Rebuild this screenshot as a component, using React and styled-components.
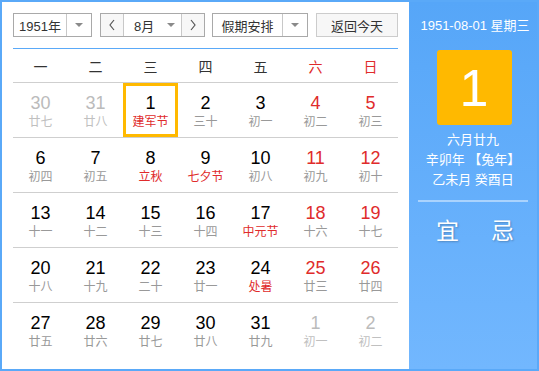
import React from "react";
import styled, { createGlobalStyle } from "styled-components";

const GlobalStyle = createGlobalStyle`
  html, body { margin: 0; padding: 0; background: #fff; }
  body { font-family: "Liberation Sans", "Noto Sans CJK SC", sans-serif; }
  * { box-sizing: border-box; }
`;

const Frame = styled.div`
  width: 539px;
  height: 371px;
  border: 2px solid #5aa9f8;
  display: flex;
  font-family: "Liberation Sans", "Noto Sans CJK SC", sans-serif;
`;

const Main = styled.div`
  width: 407px;
  background: #fff;
  padding: 11px 11px 0 11px;
  display: flex;
  flex-direction: column;
`;

const Toolbar = styled.div`
  display: flex;
  height: 24px;
  gap: 8px;
  margin-bottom: 11px;
`;

const SelectBox = styled.div`
  display: flex;
  width: ${(p) => p.$w}px;
  height: 24px;
  border: 1px solid #a9a9a9;
  background: #fff;
  margin-right: ${(p) => p.$mr || 0}px;
`;

const SelectText = styled.div`
  flex: 1;
  display: flex;
  align-items: center;
  justify-content: center;
  font-size: 13px;
  color: #333;
  border-right: 1px solid #c8c8c8;
`;

const ArrowPart = styled.div`
  width: ${(p) => p.$w || 24}px;
  display: flex;
  align-items: center;
  justify-content: center;
`;

const Triangle = styled.span`
  width: 0;
  height: 0;
  border-left: 4px solid transparent;
  border-right: 4px solid transparent;
  border-top: 4px solid #8a8a8a;
`;

const NavBtn = styled.div`
  width: 23px;
  flex: none;
  display: flex;
  align-items: center;
  justify-content: center;
  background: #f7f7f7;
  border-${(p) => p.$side}: 1px solid #c8c8c8;
`;

const MonthText = styled.div`
  flex: 1;
  display: flex;
  align-items: center;
  justify-content: space-between;
  padding: 0 6px 0 10px;
  font-size: 13px;
  color: #333;
`;

const TodayBtn = styled.div`
  width: 82px;
  height: 24px;
  border: 1px solid #cccccc;
  background: #f7f7f7;
  display: flex;
  align-items: center;
  justify-content: center;
  font-size: 13px;
  color: #333;
`;

const BlueLine = styled.div`
  height: 1px;
  background: #5aa9f8;
  width: 385px;
`;

const Grid = styled.div`
  width: 385px;
  display: grid;
  grid-template-columns: repeat(7, 55px);
`;

const HeadCell = styled.div`
  height: 34px;
  border-bottom: 1px solid #cfcfcf;
  display: flex;
  align-items: center;
  justify-content: center;
  font-size: 14px;
  color: ${(p) => (p.$weekend ? "#e02b2b" : "#333")};
`;

const DayCell = styled.div`
  height: 55px;
  border-bottom: ${(p) => (p.$last ? "none" : "1px solid #cfcfcf")};
  display: flex;
  flex-direction: column;
  align-items: center;
  padding-top: 9px;
  position: relative;
`;

const SelFrame = styled.div`
  position: absolute;
  left: 0;
  top: 0;
  width: 55px;
  height: 54px;
  border: 3px solid #ffb900;
`;

const DayNum = styled.div`
  font-size: 18px;
  line-height: 22px;
  color: ${(p) => (p.$other ? "#bbbbbb" : p.$weekend ? "#e02b2b" : "#000")};
`;

const Lunar = styled.div`
  font-size: 12px;
  line-height: 16px;
  color: ${(p) => (p.$other ? "#c0c0c0" : p.$fest ? "#e02b2b" : "#999")};
`;

const Side = styled.div`
  flex: 1;
  background: linear-gradient(to bottom, #56a6f8, #72b7fe);
  display: flex;
  flex-direction: column;
  align-items: center;
  color: #fff;
  padding-top: 14px;
`;

const SideDate = styled.div`
  font-size: 13px;
  line-height: 20px;
  margin-left: 4px;
`;

const BigBox = styled.div`
  width: 75px;
  height: 75px;
  margin-top: 14px;
  margin-left: 2px;
  background: #ffb900;
  border-radius: 3px;
  display: flex;
  align-items: center;
  justify-content: center;
  font-size: 52px;
  color: #fff;
`;

const SideLines = styled.div`
  margin-top: 5px;
  display: flex;
  flex-direction: column;
  align-items: center;
  font-size: 13px;
  line-height: 20px;
`;

const Sep = styled.div`
  width: 110px;
  height: 2px;
  background: rgba(255, 255, 255, 0.45);
  margin-top: 10px;
`;

const YiJi = styled.div`
  display: flex;
  gap: 32px;
  margin-top: 16px;
  font-size: 23px;
  line-height: 26px;
  text-shadow: 1px 1px 2px rgba(0, 0, 0, 0.25);
  margin-left: 4px;
`;

const Chevron = ({ dir }) => (
  <svg width="8" height="12" viewBox="0 0 8 12">
    <polyline
      points={dir === "l" ? "6,1 2,6 6,11" : "2,1 6,6 2,11"}
      fill="none"
      stroke="#555"
      strokeWidth="1.2"
    />
  </svg>
);

const weeks = ["一", "二", "三", "四", "五", "六", "日"];

const days = [
  [30, "廿七", 1], [31, "廿八", 1], [1, "建军节", 0, 1, 1], [2, "三十"], [3, "初一"], [4, "初二"], [5, "初三"],
  [6, "初四"], [7, "初五"], [8, "立秋", 0, 1], [9, "七夕节", 0, 1], [10, "初八"], [11, "初九"], [12, "初十"],
  [13, "十一"], [14, "十二"], [15, "十三"], [16, "十四"], [17, "中元节", 0, 1], [18, "十六"], [19, "十七"],
  [20, "十八"], [21, "十九"], [22, "二十"], [23, "廿一"], [24, "处暑", 0, 1], [25, "廿三"], [26, "廿四"],
  [27, "廿五"], [28, "廿六"], [29, "廿七"], [30, "廿八"], [31, "廿九"], [1, "初一", 1], [2, "初二", 1],
];

export default function App() {
  return (
    <>
      <GlobalStyle />
      <Frame>
        <Main>
          <Toolbar>
            <SelectBox $w={79}>
              <SelectText>1951年</SelectText>
              <ArrowPart>
                <Triangle />
              </ArrowPart>
            </SelectBox>
            <SelectBox $w={105} $mr={-1}>
              <NavBtn $side="right">
                <Chevron dir="l" />
              </NavBtn>
              <MonthText>
                <span>8月</span>
                <Triangle />
              </MonthText>
              <NavBtn $side="left">
                <Chevron dir="r" />
              </NavBtn>
            </SelectBox>
            <SelectBox $w={96}>
              <SelectText>假期安排</SelectText>
              <ArrowPart>
                <Triangle />
              </ArrowPart>
            </SelectBox>
            <TodayBtn>返回今天</TodayBtn>
          </Toolbar>
          <BlueLine />
          <Grid>
            {weeks.map((w, i) => (
              <HeadCell key={w} $weekend={i >= 5}>
                {w}
              </HeadCell>
            ))}
            {days.map(([n, l, other, fest, sel], i) => (
              <DayCell key={i} $last={i >= 28}>
                {sel && <SelFrame />}
                <DayNum $other={other} $weekend={i % 7 >= 5}>
                  {n}
                </DayNum>
                <Lunar $other={other} $fest={fest}>
                  {l}
                </Lunar>
              </DayCell>
            ))}
          </Grid>
        </Main>
        <Side>
          <SideDate>1951-08-01 星期三</SideDate>
          <BigBox>1</BigBox>
          <SideLines>
            <span>六月廿九</span>
            <span>辛卯年 【兔年】</span>
            <span>乙未月 癸酉日</span>
          </SideLines>
          <Sep />
          <YiJi>
            <span>宜</span>
            <span>忌</span>
          </YiJi>
        </Side>
      </Frame>
    </>
  );
}
